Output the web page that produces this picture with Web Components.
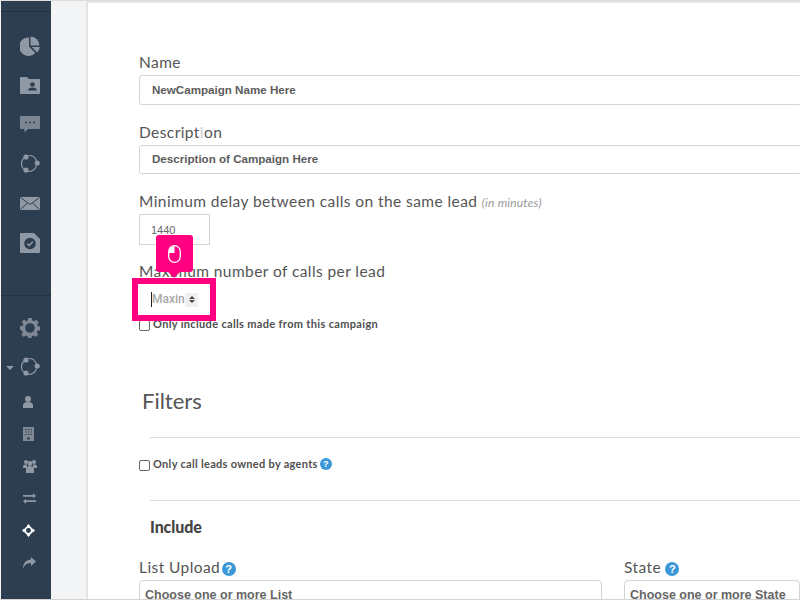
<!DOCTYPE html>
<html>
<head>
<meta charset="utf-8">
<title>Campaign</title>
<style>
  html, body { margin: 0; height: 600px; overflow: hidden; background: #f3f4f6; }
  body { display: flex; font-family: Lato, sans-serif; color: #555; box-sizing: border-box; border-top: 1px solid #dcdcdc; border-bottom: 1px solid #d4d4d4; }
</style>
</head>
<body>
<template id="side-nav-tpl">
  <style>
    :host { display: block; width: 50px; margin-left: 1px; height: 100%; background: #2d3e50; flex: none; }
    .top { height: 10px; border-bottom: 1px solid #243240; }
    .sec { display: flex; flex-direction: column; }
    .one { height: 284px; border-bottom: 1px solid #243240; padding-top: 14px; box-sizing: border-box; }
    .it { height: 39.4px; display: flex; align-items: center; justify-content: center; padding-left: 7px; position: relative; flex: none; }
    .two { padding-top: 12px; }
    .two .it { height: 32.2px; padding-left: 7px; }
    .two .it.big { height: 39px; padding-left: 8px; }
    .two .it.sm { padding-left: 4px; }
    svg { display: block; fill: #8f98a5; }
    .caret { position: absolute; left: 5px; top: 50%; margin-top: -1px; border: 4px solid transparent; border-top-color: #8f98a5; border-bottom: 0; }
  </style>
  <div class="top"></div>
  <div class="sec one">
    <div class="it"><svg width="20" height="20" viewBox="0 0 20 20"><path d="M9 1.500v9l6.200 6.400A9.200 9.200 0 1 1 9 1.500z"/><path d="M10.500 0.600a9 9 0 0 1 8.900 8.900h-8.900z"/><path d="M11.800 11h8a9 9 0 0 1-2.600 5.400z"/></svg></div>
    <div class="it"><svg width="20" height="17" viewBox="0 0 20 17"><path d="M1 0h6l2 2h10a1 1 0 0 1 1 1v13a1 1 0 0 1-1 1H1a1 1 0 0 1-1-1V1a1 1 0 0 1 1-1z"/><circle cx="12.500" cy="7.500" r="2.300" fill="#2d3e50"/><path d="M8 13.500c0-2 2-3 4.500-3s4.500 1 4.500 3z" fill="#2d3e50"/></svg></div>
    <div class="it"><svg width="20" height="17" viewBox="0 0 20 17" style="fill:#7c8693"><path d="M1 0h18a1 1 0 0 1 1 1v11a1 1 0 0 1-1 1H8l-3.500 3.500V13H1a1 1 0 0 1-1-1V1a1 1 0 0 1 1-1z"/><circle cx="6" cy="6.500" r="1" fill="#2d3e50"/><circle cx="10" cy="6.500" r="1" fill="#2d3e50"/><circle cx="14" cy="6.500" r="1" fill="#2d3e50"/></svg></div>
    <div class="it"><svg width="20" height="20" viewBox="0 0 20 20"><g fill="none" stroke="#8f98a5" stroke-width="1.100"><path d="M6 2.500A8 8 0 0 0 3.500 15"/><path d="M8 17.500a8 8 0 0 0 8.500-6"/><path d="M8.500 1.500a8 8 0 0 1 8 5.500"/></g><circle cx="6" cy="3" r="2.600"/><circle cx="17.200" cy="9" r="2.600"/><circle cx="6" cy="16" r="2.600"/></svg></div>
    <div class="it"><svg width="20" height="13" viewBox="0 0 20 13"><rect width="20" height="13" rx=".5"/><path d="M0.500 0.500L10 7.500l9.500-7M0.500 12.500L7.500 5.800M19.500 12.500L12.500 5.800" fill="none" stroke="#2d3e50" stroke-width="1"/></svg></div>
    <div class="it"><svg width="20" height="20" viewBox="0 0 20 20"><path d="M1 0h13l6 6v13a1 1 0 0 1-1 1H1a1 1 0 0 1-1-1V1a1 1 0 0 1 1-1z"/><circle cx="10" cy="10.500" r="5.800" fill="#2d3e50"/><path d="M7.300 10.500l2 2 3.500-3.800" fill="none" stroke="#8f98a5" stroke-width="1.600"/></svg></div>
  </div>
  <div class="sec two">
    <div class="it big"><svg width="20" height="20" viewBox="0 0 20 20" style="fill:#7f8894"><path fill-rule="evenodd" d="M8.200 0h3.600l.5 2.600 1.700.7 2.200-1.500 2.500 2.500-1.500 2.200.7 1.700 2.100.4v3.600l-2.600.5-.7 1.700 1.500 2.200-2.500 2.500-2.200-1.500-1.700.7-.4 2.600H8.200l-.5-2.600-1.700-.7-2.200 1.500-2.500-2.500 1.500-2.200-.7-1.700L0 11.800V8.200l2.600-.5.700-1.700-1.500-2.200 2.500-2.500L6 3.300l1.700-.7zM10 5.200a4.800 4.800 0 1 0 0 9.600 4.800 4.800 0 0 0 0-9.600z"/></svg></div>
    <div class="it big"><span class="caret"></span><svg width="20" height="20" viewBox="0 0 20 20"><g fill="none" stroke="#8f98a5" stroke-width="1.100"><path d="M6 2.500A8 8 0 0 0 3.500 15"/><path d="M8 17.500a8 8 0 0 0 8.500-6"/><path d="M8.500 1.500a8 8 0 0 1 8 5.500"/></g><circle cx="6" cy="3" r="2.600"/><circle cx="17.200" cy="9" r="2.600"/><circle cx="6" cy="16" r="2.600"/></svg></div>
    <div class="it sm"><svg width="10" height="12" viewBox="0 0 10 12"><circle cx="5" cy="3" r="3"/><path d="M0 12V9c0-2 2-3 5-3s5 1 5 3v3z"/></svg></div>
    <div class="it sm"><svg width="11" height="14" viewBox="0 0 11 14" style="fill:#7f8894"><path fill-rule="evenodd" d="M0 0h11v14H0zM2 2v1h1.500V2zm2.800 0v1h1.500V2zm2.700 0v1H9V2zM2 4.500v1h1.500v-1zm2.800 0v1h1.500v-1zm2.700 0v1H9v-1zM2 7v1h1.500V7zm2.800 0v1h1.500V7zm2.700 0v1H9V7zM4 10.500V12.500h3v-2z"/></svg></div>
    <div class="it"><svg width="14" height="13" viewBox="0 0 14 13"><circle cx="3" cy="2" r="2"/><circle cx="11" cy="2" r="2"/><circle cx="7" cy="3.500" r="2.400"/><path d="M0 8V6.500C0 5 1 4.500 3 4.500c.6 0 1 .1 1.400.3C4 5.500 3.800 6.500 3.800 8zM14 8V6.500C14 5 13 4.500 11 4.500c-.6 0-1 .1-1.400.3.400.7.600 1.700.6 3.200zM3 13V9c0-2 1.500-3 4-3s4 1 4 3v4z"/></svg></div>
    <div class="it"><svg width="13" height="11" viewBox="0 0 13 11"><path d="M0 2h10V0l3 3-3 2.200V3.700H0zM13 7.300H3V5.800L0 8.300 3 11V9h10z"/></svg></div>
    <div class="it" style="padding-left:5px"><svg width="13" height="13" viewBox="0 0 12 12" style="fill:#fff"><path fill-rule="evenodd" d="M6 0l2 2.200H7a4 4 0 0 1 2.800 2.800V4L12 6 9.800 8V7A4 4 0 0 1 7 9.800H8L6 12 4 9.800h1A4 4 0 0 1 2.200 7V8L0 6l2.200-2v1A4 4 0 0 1 5 2.200H4zM6 3.700a2.300 2.300 0 1 0 0 4.600 2.300 2.300 0 0 0 0-4.600z"/></svg></div>
    <div class="it"><svg width="13" height="12" viewBox="0 0 13 12"><path d="M8 0l5 4.500L8 9V6C5 6 2 6.500 0 12c0-5 2-9 8-9.500z"/></svg></div>
  </div>
</template>

<template id="form-field-tpl">
  <style>
    :host { display: block; }
    label { display: block; font: 400 15.500px/21px Lato, sans-serif; letter-spacing: .42px; color: #555; margin-bottom: 2px; }
  </style>
  <label><slot name="label"></slot></label>
  <slot></slot>
</template>

<template id="text-box-tpl">
  <style>
    :host { display: block; box-sizing: border-box; border: 1px solid #d4d4d4; border-radius: 3px; background: #fff; height: 30px; padding: 0 12px; font: 700 11.600px/28px "Liberation Sans", sans-serif; color: #5c5c5c; white-space: nowrap; overflow: hidden; }
    :host([short]) { height: 29px; line-height: 26px; }
    :host([plain]) { border-radius: 0; font-weight: 400; font-size: 11px; height: 31px; line-height: 30px; width: 71px; padding-left: 11px; color: #666; }
    :host([flat]) { padding-left: 5px; font-size: 12.500px; color: #666; border-radius: 4px; height: 40px; }
  </style>
  <slot></slot>
</template>

<template id="check-row-tpl">
  <style>
    :host { display: flex; align-items: center; font: 700 11px/14px Lato, sans-serif; letter-spacing: .3px; color: #4f4f4f; }
    i { display: block; width: 9px; height: 9px; border: 1px solid #666; border-radius: 2px; background: #fff; margin-right: 3px; flex: none; position: relative; top: 1px; }
  </style>
  <i></i><slot></slot>
</template>

<template id="help-mark-tpl">
  <style>
    :host { display: inline-block; width: var(--s, 14px); height: var(--s, 14px); border-radius: 50%; background: #3b97d8; color: #fff; text-align: center; font: 700 calc(var(--s, 14px) - 3px)/var(--s, 14px) "Liberation Sans", sans-serif; letter-spacing: 0; }
  </style>?
</template>

<template id="click-hint-tpl">
  <style>
    :host { position: absolute; left: 132px; top: 235px; width: 84px; height: 86px; display: block; pointer-events: none; }
    .tip { position: absolute; left: 24px; top: 0; width: 37px; height: 37px; background: #ff0080; border-radius: 3px; display: flex; align-items: center; justify-content: center; }
    .tip::after { content: ""; position: absolute; left: 12px; top: 37px; border: 6px solid transparent; border-top-color: #ff0080; border-bottom: 0; }
    .box { position: absolute; left: 0; top: 43px; width: 84px; height: 43px; box-sizing: border-box; border: 6px solid #ff0080; background: #fff; display: flex; align-items: center; padding-left: 13px; font: 700 12px/1 "Roboto", sans-serif; color: #a8a8a8; }
    .box b { border-left: 1px solid #222; height: 15px; line-height: 15px; font-weight: 500; overflow: hidden; width: 33px; flex: none; white-space: nowrap; }
    .spin { width: 13px; height: 14px; background: #f0f0f0; display: flex; flex-direction: column; align-items: center; justify-content: center; gap: 1px; }
    .spin u { border: 3px solid transparent; border-bottom: 3px solid #444; border-top: 0; }
    .spin u + u { border-top: 3px solid #444; border-bottom: 0; }
  </style>
  <div class="tip"><svg width="13" height="18" viewBox="0 0 13 18"><rect x=".7" y=".7" width="11.600" height="16.600" rx="5.800" fill="none" stroke="#fff" stroke-width="1.300"/><path d="M6.500 1A5.500 5.500 0 0 0 1 6.500V8h5.500z" fill="#fff"/></svg></div>
  <div class="box"><b>Maxin</b><span class="spin"><u></u><u></u></span></div>
</template>

<template id="campaign-form-tpl">
  <style>
    :host { display: block; margin-left: 35px; flex: 1; min-width: 0; background: #fff; border-left: 2px solid #e4e4e4; border-top: 2px solid #e4e4e4; padding: 49px 0 0 51px; box-sizing: border-box; height: 100%; overflow: hidden; }
    .wide { margin-right: -2px; }
    form-field + form-field { margin-top: 16px; }
    .wide + .wide { margin-top: 17px; }
    .cols form-field + form-field { margin-top: 0; }
    .nudge { display: block; padding-top: 1px; margin-bottom: -1px; }
    small { font-size: 12px; font-style: italic; color: #999; letter-spacing: .2px; }
    h2 { font: 400 22px/28px Lato, sans-serif; letter-spacing: 0; color: #555; margin: 56px 0 22px 3px; }
    h3 { font: 900 16px/20px Lato, sans-serif; letter-spacing: -.1px; color: #444; margin: 16px 0 20px 11px; }
    hr { border: 0; border-top: 1px solid #ddd; margin: 0 0 0 11px; }
    .chk { margin: 19px 0 29px; }
    .chk help-mark { margin-left: -1px; }
    .cols { display: grid; grid-template-columns: 463px 1fr; column-gap: 22px; }
    .tight { margin-left: -3px; }
    .first { margin-top: 3px; letter-spacing: .34px; }
    .fill { height: 30px; }
    .faint { color: #ccc; }
  </style>
  <form-field class="wide"><span slot="label">Name</span><text-box>NewCampaign Name Here</text-box></form-field>
  <form-field class="wide"><span slot="label">Descript<span class="faint">i</span>on</span><text-box short>Description of Campaign Here</text-box></form-field>
  <form-field class="delay"><span slot="label" class="nudge">Minimum delay between calls on the same lead <small>(in minutes)</small></span><text-box plain>1440</text-box></form-field>
  <form-field><span slot="label">Maximum number of calls per lead</span><div class="fill"></div></form-field>
  <check-row class="first">Only include calls made from this campaign</check-row>
  <h2>Filters</h2>
  <hr>
  <check-row class="chk">Only call leads owned by agents&nbsp;<help-mark style="--s:12px"></help-mark></check-row>
  <hr>
  <h3>Include</h3>
  <div class="cols">
    <form-field><span slot="label">List Upload <help-mark class="tight"></help-mark></span><text-box flat>Choose one or more List</text-box></form-field>
    <form-field><span slot="label">State <help-mark></help-mark></span><text-box flat>Choose one or more State</text-box></form-field>
  </div>
</template>

<script>
  // every element just clones its template into an open shadow root
  function define(name) {
    customElements.define(name, class extends HTMLElement {
      constructor() {
        super();
        this.attachShadow({ mode: 'open' });
        this.shadowRoot.appendChild(document.getElementById(name + '-tpl').content.cloneNode(true));
      }
    });
  }
  ['side-nav', 'form-field', 'text-box', 'check-row', 'help-mark', 'click-hint', 'campaign-form'].forEach(define);
</script>
<side-nav></side-nav>
<campaign-form></campaign-form>
<click-hint></click-hint>
</body>
</html>
